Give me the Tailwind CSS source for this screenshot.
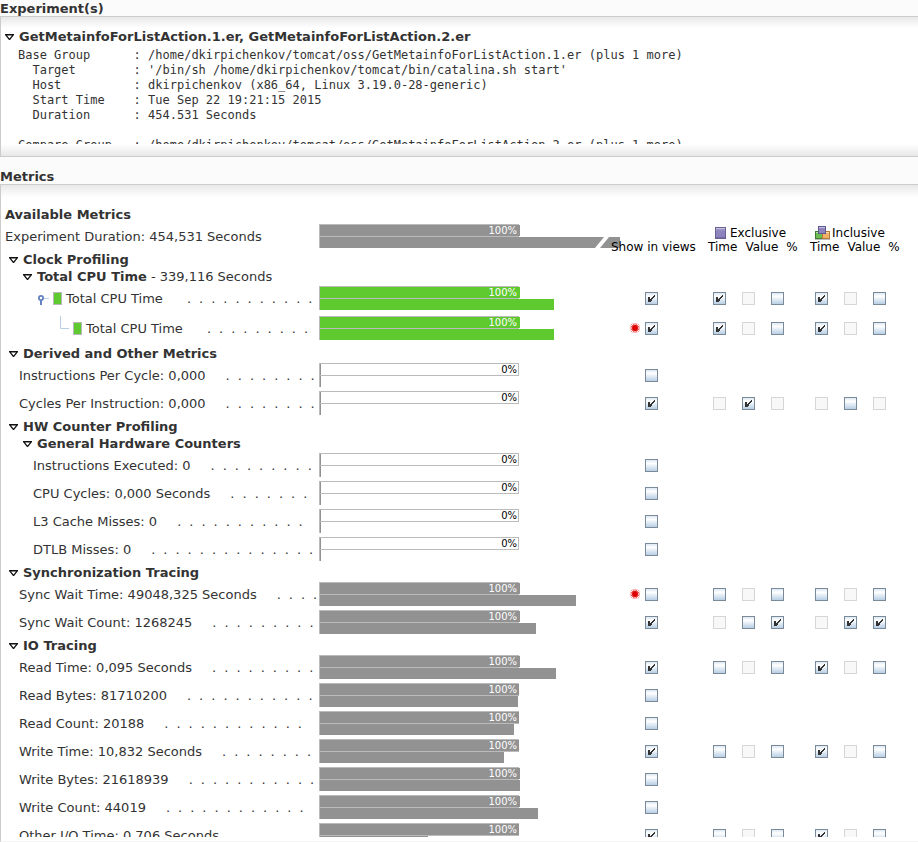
<!DOCTYPE html>
<html lang="en">
<head>
<meta charset="utf-8">
<title>Experiments and Metrics</title>
<script src="https://cdn.jsdelivr.net/npm/@tailwindcss/browser@4"></script>
</head>
<body class="h-screen flex flex-col overflow-hidden bg-[#fbfbfb] text-[#333] text-[13px] leading-4 font-['DejaVu_Sans',sans-serif]">

<h2 class="h-4 pt-px font-bold">Experiment(s)</h2>
<section class="border-y border-l border-[#cccccc] bg-white">
  <div class="h-[11px] bg-linear-to-b from-[#e8e8e8] to-white"></div>
  <div class="h-[116px] overflow-hidden">
    <button type="button" class="flex h-[17px] items-center gap-[5px] pl-1 font-bold">
      <svg class="w-[9px] h-[6px]" viewBox="0 0 9 6"><path d="M0 0H9V1L5 6H4L0 1ZM2 1.6 4.5 4.4 7 1.6Z" fill="#111" fill-rule="evenodd"/></svg>
      GetMetainfoForListAction.1.er, GetMetainfoForListAction.2.er
    </button>
    <pre class="pl-[17px] pt-[3px] text-[12px] leading-[15px] font-['DejaVu_Sans_Mono',monospace]">Base Group      : /home/dkirpichenkov/tomcat/oss/GetMetainfoForListAction.1.er (plus 1 more)
  Target        : '/bin/sh /home/dkirpichenkov/tomcat/bin/catalina.sh start'
  Host          : dkirpichenkov (x86_64, Linux 3.19.0-28-generic)
  Start Time    : Tue Sep 22 19:21:15 2015
  Duration      : 454.531 Seconds

Compare Group   : /home/dkirpichenkov/tomcat/oss/GetMetainfoForListAction.2.er (plus 1 more)</pre>
  </div>
  <div class="h-3 bg-linear-to-b from-white to-[#e8e8e8]"></div>
</section>

<h2 class="pt-3 h-[27px] font-bold">Metrics</h2>
<section class="flex-1 min-h-0 flex flex-col border-y border-l border-t-[#cccccc] border-l-[#cccccc] border-b-[#f4f4f4] bg-white pb-1">
  <div class="h-3 shrink-0 bg-linear-to-b from-[#e8e8e8] to-white"></div>
  <div class="flex-1 min-h-0 overflow-hidden pt-[9px]">
    <h3 class="h-[17px] pt-px pl-1 font-bold">Available Metrics</h3>
    <table class="w-full table-fixed">
      <colgroup>
        <col class="w-[318px]"><col class="w-[291px]"><col class="w-[95px]">
        <col class="w-[29px]"><col class="w-[29px]"><col class="w-[44px]">
        <col class="w-[29px]"><col class="w-[29px]"><col>
      </colgroup>
      <tbody id="metrics"></tbody>
    </table>
  </div>
</section>

<script>
// Outlined disclosure arrow for expanded groups
const ARROW = '<svg class="w-[9px] h-[6px]" viewBox="0 0 9 6"><path d="M0 0H9V1L5 6H4L0 1ZM2 1.6 4.5 4.4 7 1.6Z" fill="#111" fill-rule="evenodd"/></svg>';
const TICK = '<svg class="hidden peer-checked:block col-start-1 row-start-1 size-[13px] pointer-events-none" viewBox="0 0 13 13" shape-rendering="crispEdges"><path fill="#333" d="M3 5h2v5H3zM9 3h1v2H9zM8 4h1v2H8zM7 5h1v2H7zM6 6h1v3H6zM5 7h1v3H5z"/></svg>';
const STAR = '<svg class="size-[10px]" viewBox="0 0 10 10"><path d="M5 0V10M0 5H10M1.4 1.4 8.6 8.6M8.6 1.4 1.4 8.6M3 .4 7 9.6M7 .4 3 9.6M.4 3 9.6 7M.4 7 9.6 3" stroke="#f03030" stroke-width=".8"/><circle cx="5" cy="5" r="2.9" fill="#dd0000"/></svg>';
const SWATCH = '<span class="w-[9px] h-[13px] border border-[#b8b8b8] bg-[#5fc930]"></span>';
const KNOB = '<svg class="w-3 h-[13px]" viewBox="0 0 12 13"><path d="M7 6.5H12" stroke="#b8cfe5"/><circle cx="4" cy="6" r="2.1" fill="#fff" stroke="#6382bf" stroke-width="1.8"/><path d="M4 8V13" stroke="#6382bf" stroke-width="2"/></svg>';
const BRANCH = '<svg class="w-3 h-6" viewBox="0 0 12 24"><path d="M3.5 -2V12.5H12" fill="none" stroke="#b8cfe5"/></svg>';
const CUBE = '<svg class="w-[11px] h-3" viewBox="0 0 11 12"><rect x=".5" y=".5" width="10" height="11" fill="#8f83bd" stroke="#6a6295"/><path d="M1 1.5H10" stroke="#c9c3e2"/><path d="M1 3H10" stroke="#a89ecf"/><path d="M1 10.5H10" stroke="#756ba5"/></svg>';
const CUBES = '<svg class="w-[15px] h-[14px]" viewBox="0 0 15 14"><rect x=".5" y="5.5" width="7" height="7" fill="#6ebd52" stroke="#3f7d35"/><path d="M1 6.5H7" stroke="#b6e2a4"/><rect x="7.5" y="5.5" width="7" height="7" fill="#f0b068" stroke="#b67a3a"/><path d="M8 6.5H14" stroke="#ffdfae"/><path d="M0 13.5H15" stroke="#bbb"/><rect x="3.5" y=".5" width="7" height="7" fill="#8f83bd" stroke="#5f5790"/><path d="M4 1.5H10" stroke="#c9c3e2"/></svg>';

const check = (state, name) => state === '-' ? '' :
  `<label class="grid w-[13px] h-[13px]"><input type="checkbox" aria-label="${name}" class="peer appearance-none col-start-1 row-start-1 size-[13px] border border-[#7a8a99] bg-linear-to-b from-[#dde8f3] via-white via-30% to-[#b8cfe5] disabled:border-[#d6d6d6] disabled:bg-none disabled:bg-[#f8f8f8]" ${state === 'c' ? 'checked' : ''} ${state === 'd' ? 'disabled' : ''}>${TICK}</label>`;

const bar = (top, bottom, green, broken) => {
  const fill = green ? 'bg-[#5fc930]' : 'bg-[#929292]';
  return `<div class="h-6 border-l border-[#bbbbbb]">
    <div class="relative w-[199px] h-[13px] border-y border-r border-[#bbbbbb]">
      <div class="h-[11px] ${fill}" style="width:${top}px"></div>
      <span class="absolute right-0 inset-y-0 pr-px text-[10px] leading-[11px] ${top > 1 ? 'text-white' : 'text-black'}">${top > 1 ? '100%' : '0%'}</span>
    </div>
    <div class="h-[11px] ${fill}" style="width:${bottom}px">${broken ? '<svg class="w-full h-full" viewBox="0 0 300 11"><path d="M284 0H289L280 11H275Z" fill="#fff"/></svg>' : ''}</div>
  </div>`;
};

const group = (label, nested, extra) => `<tr><th colspan="9" scope="rowgroup" class="p-0 text-left font-normal">
  <div class="flex h-[17px] items-center ${nested ? 'pl-[22px]' : 'pl-2'}"><button type="button" class="flex items-center gap-[5px] font-bold">${ARROW}${label}</button>${extra ? `<span class="pl-1">${extra}</span>` : ''}</div></th></tr>`;

const COLS = ['Exclusive time', 'Exclusive value', 'Exclusive %', 'Inclusive time', 'Inclusive value', 'Inclusive %'];
const metric = (label, dots, top, bottom, states, o = {}) => `<tr class="align-top">
  <th scope="row" class="p-0 pt-px text-left font-normal ${o.tall ? 'pb-[5px]' : 'pb-[3px]'}">
    <div class="flex h-6 items-center whitespace-nowrap ${o.indent || 'pl-[18px]'}">${o.icon || ''}<span class="pt-[2px]">${label}</span><span class="flex gap-2 pl-5 pt-[2px]" aria-hidden="true">${'<span>.</span>'.repeat(dots)}</span></div></th>
  <td class="p-0 pt-px">${bar(top, bottom, o.green)}</td>
  <td class="p-0 pt-px"><div class="flex h-6 items-center gap-[5px] pl-5"><span class="size-[10px]">${o.star ? STAR : ''}</span>${check(states[0], label + ' show in views')}</div></td>
  ${COLS.map((c, i) => `<td class="p-0 pt-px"><div class="flex h-6 items-center pl-2">${check(states[i + 1], label + ' ' + c)}</div></td>`).join('')}
</tr>`;

const heading = (icon, name, pad) => `<th colspan="3" scope="colgroup" class="p-0 pt-[3px] text-left font-normal text-black text-[12px] leading-[14px]">
  <div class="flex h-[14px] items-center ${pad}">${icon}${name}</div>
  <div class="flex h-[10px] gap-2 pl-[3px] whitespace-nowrap"><span>Time</span><span>Value</span><span>%</span></div></th>`;

document.getElementById('metrics').innerHTML = [
  `<tr class="align-top"><th scope="row" class="p-0 pt-px pb-[3px] text-left font-normal"><div class="flex h-6 items-center pl-1"><span class="pt-[2px]">Experiment Duration: 454,531 Seconds</span></div></th>
   <td class="p-0 pt-px">${bar(200, 300, false, true)}</td>
   <th scope="col" class="relative p-0 pt-[17px] pl-px text-left font-normal text-black text-[12px] leading-[14px] whitespace-nowrap"><div class="h-[10px]">Show in views</div></th>
   ${heading(CUBE, 'Exclusive', 'pl-[10px] gap-1')}${heading(CUBES, 'Inclusive', 'pl-2 gap-[2px]')}</tr>`,
  group('Clock Profiling'),
  group('Total CPU Time', true, '- 339,116 Seconds'),
  metric('Total CPU Time', 11, 200, 234, 'ccducdu', { green: true, tall: true, indent: 'pl-9 gap-1', icon: KNOB + SWATCH }),
  metric('Total CPU Time', 9, 200, 234, 'ccducdu', { green: true, tall: true, star: true, indent: 'pl-14 gap-1', icon: BRANCH + SWATCH }),
  group('Derived and Other Metrics'),
  metric('Instructions Per Cycle: 0,000', 8, 1, 1, 'u------'),
  metric('Cycles Per Instruction: 0,000', 8, 1, 1, 'cdcddud'),
  group('HW Counter Profiling'),
  group('General Hardware Counters', true),
  metric('Instructions Executed: 0', 9, 1, 1, 'u------', { indent: 'pl-8' }),
  metric('CPU Cycles: 0,000 Seconds', 7, 1, 1, 'u------', { indent: 'pl-8' }),
  metric('L3 Cache Misses: 0', 11, 1, 1, 'u------', { indent: 'pl-8' }),
  metric('DTLB Misses: 0', 14, 1, 1, 'u------', { indent: 'pl-8' }),
  group('Synchronization Tracing'),
  metric('Sync Wait Time: 49048,325 Seconds', 4, 200, 256, 'uuduudu', { star: true }),
  metric('Sync Wait Count: 1268245', 9, 200, 216, 'cducdcc'),
  group('IO Tracing'),
  metric('Read Time: 0,095 Seconds', 9, 200, 236, 'cuducdu'),
  metric('Read Bytes: 81710200', 11, 199, 198, 'u------'),
  metric('Read Count: 20188', 12, 199, 194, 'u------'),
  metric('Write Time: 10,832 Seconds', 8, 199, 184, 'cuducdu'),
  metric('Write Bytes: 21618939', 11, 200, 200, 'u------'),
  metric('Write Count: 44019', 12, 200, 218, 'u------'),
  metric('Other I/O Time: 0,706 Seconds', 7, 199, 108, 'cuducdu'),
].join('');
</script>
</body>
</html>
